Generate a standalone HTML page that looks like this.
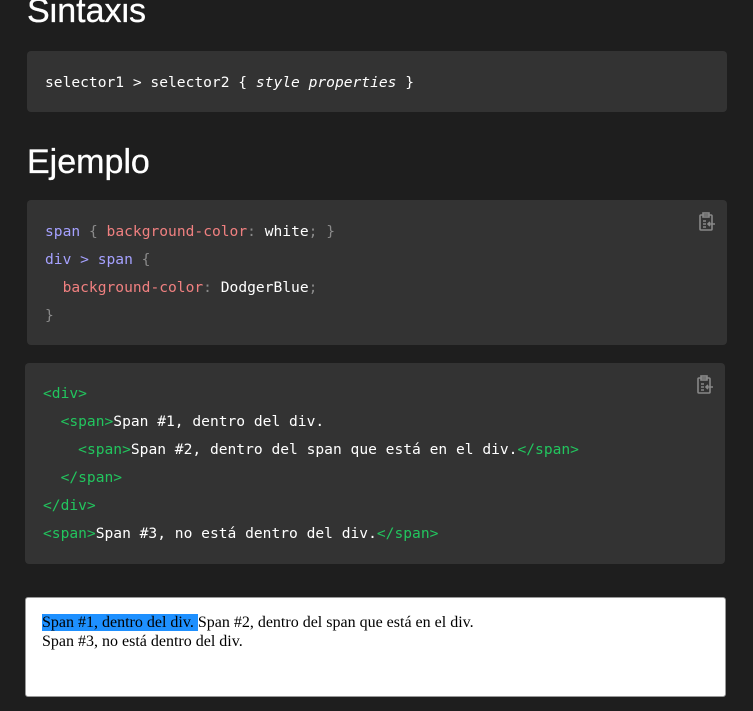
<!DOCTYPE html>
<html><head><style>
body{margin:0;background:#1e1e1e;width:753px;height:711px;overflow:hidden;position:relative;font-family:"Liberation Sans",sans-serif;color:#fff}
h2{position:absolute;margin:0;font-weight:normal;font-size:34px;left:27px;-webkit-text-stroke:0.3px #fff}
.box{position:absolute;background:#333;border-radius:4px;font-family:"DejaVu Sans Mono",monospace;font-size:14.6px;color:#fff}
.l{position:absolute;left:18px;white-space:pre;line-height:28px}
.p{color:#a5a1ff}.r{color:#f08080}.g{color:#8a8a8a}.t{color:#22c55e}
.ic{position:absolute;width:16px;height:20px}
</style></head><body>
<h2 style="top:-8px">Sintaxis</h2>
<div class="box" style="left:27px;top:51px;width:700px;height:61px"><div class="l" style="top:18px">selector1 &gt; selector2 { <i>style properties</i> }</div></div>
<h2 style="top:143px">Ejemplo</h2>
<div class="box" style="left:27px;top:200px;width:700px;height:145px">
<div class="l" style="top:18px"><span class="p">span</span> <span class="g">{</span> <span class="r">background-color</span><span class="g">:</span> white<span class="g">; }</span></div>
<div class="l" style="top:46px"><span class="p">div &gt; span</span> <span class="g">{</span></div>
<div class="l" style="top:74px">  <span class="r">background-color</span><span class="g">:</span> DodgerBlue<span class="g">;</span></div>
<div class="l" style="top:102px"><span class="g">}</span></div>
<svg class="ic" style="left:672px;top:12px" viewBox="0 0 16 20" fill="none" stroke="#888" stroke-width="1.6"><rect x="1" y="3" width="12" height="15" rx="1"/><rect x="4" y="1" width="6" height="4"/><path d="M4 9h3M4 12h3M4 15h3M9 12h7M11 10l-2 2 2 2"/></svg>
</div>
<div class="box" style="left:25px;top:363px;width:700px;height:201px">
<div class="l" style="top:17px"><span class="t">&lt;div&gt;</span></div>
<div class="l" style="top:45px">  <span class="t">&lt;span&gt;</span>Span #1, dentro del div.</div>
<div class="l" style="top:73px">    <span class="t">&lt;span&gt;</span>Span #2, dentro del span que está en el div.<span class="t">&lt;/span&gt;</span></div>
<div class="l" style="top:101px">  <span class="t">&lt;/span&gt;</span></div>
<div class="l" style="top:129px"><span class="t">&lt;/div&gt;</span></div>
<div class="l" style="top:157px"><span class="t">&lt;span&gt;</span>Span #3, no está dentro del div.<span class="t">&lt;/span&gt;</span></div>
<svg class="ic" style="left:672px;top:12px" viewBox="0 0 16 20" fill="none" stroke="#888" stroke-width="1.6"><rect x="1" y="3" width="12" height="15" rx="1"/><rect x="4" y="1" width="6" height="4"/><path d="M4 9h3M4 12h3M4 15h3M9 12h7M11 10l-2 2 2 2"/></svg>
</div>
<div style="position:absolute;left:25px;top:597px;width:701px;height:100px;background:#fff;border:1px solid #999;border-radius:3px;color:#000;font-family:'Liberation Serif',serif;font-size:16px;line-height:19px;padding:15px 0 0 16px;box-sizing:border-box">
<span style="background:#1e90ff">Span #1, dentro del div. </span>Span #2, dentro del span que está en el div.<br>Span #3, no está dentro del div.
</div>
</body></html>
